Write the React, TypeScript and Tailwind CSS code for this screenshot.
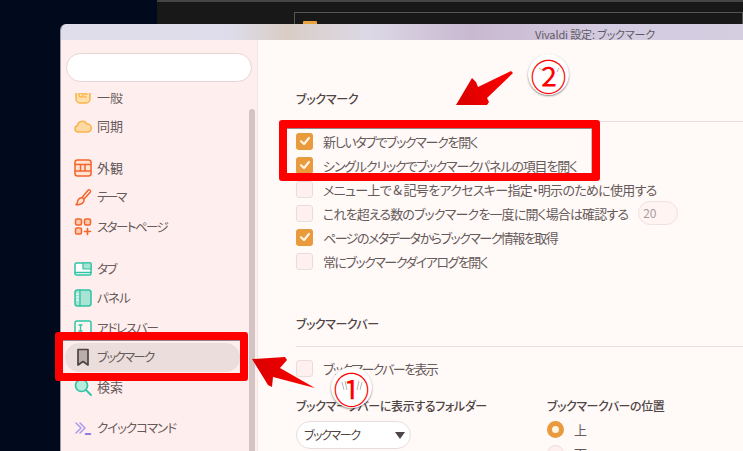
import React from "react";

const font = "[font-family:'Noto_Sans_CJK_JP','Noto_Sans',sans-serif] [font-feature-settings:'palt']";

function Icon({ children }: { children: React.ReactNode }) {
  return (
    <svg width="20" height="20" viewBox="0 0 20 20" fill="none" strokeLinecap="round" strokeLinejoin="round" className="shrink-0">
      {children}
    </svg>
  );
}

const O = "#f5652a";
const Y = "#f9b44a";
const G = "#2fc4a4";
const P = "#a99bf0";

function Nav({ icon, label, active, mt, text }: { icon: React.ReactNode; label: string; active?: boolean; mt?: string; text?: string }) {
  return (
    <div className={`flex h-[29.5px] w-[175px] shrink-0 items-center gap-[4px] rounded-[15px] pl-[8px] ${active ? "bg-[#ebdddc]" : ""} ${mt ?? ""}`}>
      {icon}
      <span className={`whitespace-nowrap leading-none text-[#665a5a] ${text ?? "text-[13px]"}`}>{label}</span>
    </div>
  );
}

function Check({ on }: { on?: boolean }) {
  if (on)
    return (
      <span className="flex size-[17px] shrink-0 items-center justify-center rounded-[3px] bg-[#e89a3c]">
        <svg width="12" height="12" viewBox="0 0 12 12" fill="none">
          <path d="M2 6.2 5 9 10 3" stroke="#fff3e2" strokeWidth="2.2" strokeLinecap="round" strokeLinejoin="round" />
        </svg>
      </span>
    );
  return <span className="size-[17px] shrink-0 rounded-[3px] border border-[#eadcdc] bg-[#fff0f0]" />;
}

function Row({ on, label, track, extra }: { on?: boolean; label: string; track: string; extra?: React.ReactNode }) {
  return (
    <div className="flex h-[24px] items-center gap-[10px]">
      <Check on={on} />
      <span className={`whitespace-nowrap text-[13px] leading-none text-[#665a5a] ${track}`}>{label}</span>
      {extra}
    </div>
  );
}

export default function App() {
  return (
    <div className={`relative h-[451px] w-[743px] overflow-hidden bg-[#000a1c] ${font}`}>
      {/* window behind */}
      <div className="absolute left-[157px] right-0 top-0 h-[30px] border-t-2 border-[#444444] bg-[#181818]">
        <div className="ml-[137px] mt-[10px] h-[30px] border border-[#555555] pl-[8px] pt-[8px]">
          <div className="h-[6px] w-[14px] rounded-[1px] bg-[#e8a33c]" />
        </div>
      </div>

      {/* settings window */}
      <div className="absolute bottom-0 left-[60px] right-0 top-[24px] flex flex-col overflow-hidden rounded-tl-[6px] border-l border-[#9a9aa0]">
        <div className="flex h-[16px] shrink-0 justify-end bg-[linear-gradient(90deg,#e0deea_0%,#dedcea_25%,#d9cdc6_33%,#dcd9e6_45%,#c9b9d0_60%,#d3cbdf_80%,#d5cde0_100%)] pr-[88px]">
          <span className="pt-[4px] text-[11px] leading-[13px] tracking-[-0.15px] text-[#5f5a66]">Vivaldi 設定: ブックマーク</span>
        </div>
        <div className="flex min-h-0 flex-1">
          {/* sidebar */}
          <div className="relative flex w-[197px] shrink-0 flex-col overflow-hidden border-r border-[#f6e8e6] bg-[#ffeeee]">
            <div className="shrink-0 px-[5px] pb-[11px] pt-[13px]">
              <div className="h-[29px] w-[186px] rounded-[15px] border border-[#e8d4d4] bg-white" />
            </div>
            <div className="relative min-h-0 flex-1 overflow-hidden">
              <div className="absolute left-[4px] top-[-11.5px] flex flex-col">
                <Nav label="一般" icon={<Icon><rect x="3" y="2" width="14" height="15" rx="4" fill="#ffe0ac" stroke={Y} strokeWidth="1.5" /><circle cx="8" cy="9" r="2" stroke={Y} strokeWidth="1.3" /><path d="M11 8h3M11 11h2" stroke={Y} strokeWidth="1.3" /></Icon>} />
                <Nav label="同期" icon={<Icon><path d="M5 16a3.2 3.2 0 0 1-.6-6.3A5 5 0 0 1 13.8 8a4 4 0 0 1 1 8z" fill="#ffd9a3" stroke={Y} strokeWidth="1.5" /></Icon>} />
                <Nav mt="mt-[12.5px]" label="外観" icon={<Icon><rect x="2" y="2" width="16" height="16" rx="2.5" fill="#ffe3d4" stroke={O} strokeWidth="1.5" /><path d="M2 6.5h16M2 13h16M7.5 6.5V13M12 6.5V13" stroke={O} strokeWidth="1.5" /></Icon>} />
                <Nav text="text-[12.5px] tracking-[-2.2px]" label="テーマ" icon={<Icon><path d="M9 10.5 15 3.300a1.500 1.500 0 0 1 2.300 1.900L11 12" stroke={O} strokeWidth="1.500" /><path d="M3 17.500c1.500-.8 1.300-2.600 2-4.200 1-2.200 3.500-3.300 5-2.200 1.700 1.300 1.200 3.800-.8 5.300-1.800 1.300-4.300 1.400-6.200 1.100z" fill="#ffe3d4" stroke={O} strokeWidth="1.500" /></Icon>} />
                <Nav text="text-[12.5px] tracking-[-1.55px]" label="スタートページ" icon={<Icon><rect x="2.500" y="2" width="6" height="6" rx="1.500" fill="#fbc9ae" stroke={O} strokeWidth="1.500" /><rect x="11.500" y="2" width="6" height="6" rx="1.500" fill="#fbc9ae" stroke={O} strokeWidth="1.500" /><rect x="2.500" y="11" width="6" height="6" rx="1.500" fill="#fbc9ae" stroke={O} strokeWidth="1.500" /><path d="M14.500 11.500v6M11.500 14.500h6" stroke={O} strokeWidth="1.600" /></Icon>} />
                <Nav mt="mt-[12.5px]" text="text-[12.5px] tracking-[-1.5px]" label="タブ" icon={<Icon><rect x="2" y="4" width="16" height="12" rx="1.500" fill="#fff" stroke={G} strokeWidth="1.500" /><rect x="10" y="4" width="8" height="6" fill="#a8e3d3" stroke={G} strokeWidth="1.200" /><path d="M2 13.500h16" stroke={G} strokeWidth="1.500" /></Icon>} />
                <Nav text="text-[12.5px] tracking-[-0.8px]" label="パネル" icon={<Icon><rect x="2" y="2" width="16" height="16" rx="2.500" fill="#a8e3d3" stroke={G} strokeWidth="1.500" /><path d="M7 2v16" stroke={G} strokeWidth="1.300" /><path d="M3.500 6h2M3.500 9h2M3.500 12h2" stroke="#fff" strokeWidth="1.200" /></Icon>} />
                <Nav text="text-[12.5px] tracking-[-1.2px]" label="アドレスバー" icon={<Icon><rect x="2" y="3" width="16" height="14" rx="2" fill="#fff4f0" stroke={G} strokeWidth="1.500" /><path d="M6 7h3M6 13h3M7.500 7v6" stroke={G} strokeWidth="1.300" /></Icon>} />
                <Nav active text="text-[12.5px] tracking-[-1.7px]" label="ブックマーク" icon={<Icon><path d="M5 2.500h10V18l-5-3.500L5 18z" fill="#b9adad" stroke="#4e4444" strokeWidth="1.700" /></Icon>} />
                <Nav label="検索" icon={<Icon><circle cx="8.500" cy="8.500" r="6" fill="#b7ebdc" stroke={G} strokeWidth="1.700" /><path d="m13 13 5 5" stroke={G} strokeWidth="1.800" /></Icon>} />
                <Nav mt="mt-[11.5px]" text="text-[12.5px] tracking-[-1.05px]" label="クイックコマンド" icon={<Icon><path d="m3 5 5 5-5 5M7 5l5 5-5 5" stroke={P} strokeWidth="1.500" /><path d="M12.500 16h5" stroke="#6a5ae0" strokeWidth="1.500" /></Icon>} />
                <Nav text="text-[12.5px] tracking-[-1.05px]" label="キーボード" icon={<Icon><rect x="2" y="5" width="16" height="10" rx="2" stroke={P} strokeWidth="1.500" /></Icon>} />
              </div>
              <div className="absolute bottom-0 left-[188px] top-[16px] w-[6px] rounded-t-[3px] bg-[#d3c3c3]" />
            </div>
          </div>

          {/* content */}
          <div className="min-w-0 flex-1 overflow-hidden bg-[#fff9f7] pl-[38px] pt-[50px]">
            <h2 className="text-[12px] font-medium leading-[18px] tracking-[-0.3px] text-[#4f4545]">ブックマーク</h2>
            <div className="mt-[13px] h-px bg-[#eadcdc]" />
            <div className="mt-[7px] flex flex-col">
              <Row on track="tracking-[-1.33px]" label="新しいタブでブックマークを開く" />
              <Row on track="tracking-[-1.17px]" label="シングルクリックでブックマークパネルの項目を開く" />
              <Row track="tracking-[-0.7px]" label="メニュー上で & 記号をアクセスキー指定・明示のために使用する" />
              <Row
                track="tracking-[-0.85px]"
                label="これを超える数のブックマークを一度に開く場合は確認する"
                extra={<span className="flex h-[24px] w-[40px] items-center rounded-[12px] border border-[#f0e2e0] bg-[#fff4f2] pl-[4px] text-[12px] text-[#a89c9c]">20</span>}
              />
              <Row on track="tracking-[-1.5px]" label="ページのメタデータからブックマーク情報を取得" />
              <Row track="tracking-[-1.5px]" label="常にブックマークダイアログを開く" />
            </div>
            <h2 className="mt-[42px] text-[12px] font-medium leading-[18px] tracking-[-0.5px] text-[#4f4545]">ブックマークバー</h2>
            <div className="mt-[13px] h-px bg-[#eadcdc]" />
            <div className="mt-[9px]">
              <Row track="tracking-[-1.6px]" label="ブックマークバーを表示" />
            </div>
            <div className="mt-[17px] flex">
              <div className="w-[251px]">
                <div className="text-[12px] font-medium leading-[18px] tracking-[-0.35px] text-[#4f4545]">ブックマークバーに表示するフォルダー</div>
                <div className="mt-[6px] flex h-[28px] w-[115px] items-center justify-between rounded-[14px] border border-[#eadcdc] bg-white pl-[7px] pr-[5px]">
                  <span className="text-[12px] leading-none tracking-[-1.4px] text-[#4f4545]">ブックマーク</span>
                  <span className="h-0 w-0 border-x-[5px] border-t-[7px] border-x-transparent border-t-[#4f4545]" />
                </div>
              </div>
              <div>
                <div className="text-[12px] font-medium leading-[18px] tracking-[-0.45px] text-[#4f4545]">ブックマークバーの位置</div>
                <div className="mt-[6px] flex h-[17px] items-center gap-[10px]">
                  <span className="size-[17px] rounded-full border-[5px] border-[#e89a3c] bg-[#fff4e6]" />
                  <span className="text-[13px] leading-none text-[#665a5a]">上</span>
                </div>
                <div className="mt-[7px] flex h-[17px] items-center gap-[10px]">
                  <span className="size-[17px] rounded-full border border-[#eadcdc] bg-[#fff0f0]" />
                  <span className="text-[13px] leading-none text-[#665a5a]">下</span>
                </div>
              </div>
            </div>
          </div>
        </div>
      </div>

      {/* annotations */}
      <div className="absolute left-[279px] top-[120px] h-[61px] w-[321px] rounded-[3px] border-[8px] border-[#fe0000] shadow-[inset_0_1px_0_#8f8787,inset_-1px_0_0_#c8c0c0]" />
      <div className="absolute left-[55px] top-[332px] h-[49px] w-[193px] rounded-[3px] border-[8px] border-[#fe0000] shadow-[inset_0_1px_0_#8f8787]" />
      <svg className="absolute left-0 top-0" width="743" height="451" viewBox="0 0 743 451" fill="none">
        <defs>
          <linearGradient id="a1" x1="0" y1="0" x2="1" y2="0">
            <stop offset="0" stopColor="#d80000" />
            <stop offset="1" stopColor="#ff0000" />
          </linearGradient>
        </defs>
        <path d="M456 105 472 78 476 82 478 87 511 71 513 73 487 98 489 102 487 105z" fill="url(#a1)" />
        <path d="M252 359 285 357 287 360 280 368 315 388 273 377 272 387 268 385z" fill="url(#a1)" />
      </svg>
      <div className="absolute left-[528px] top-[54px] flex size-[41px] items-center justify-center rounded-full bg-white text-[36px] leading-none text-[#fe0000] shadow-[0_1px_2px_rgba(0,0,0,0.45)]">②</div>
      <div className="absolute left-[331px] top-[367px] flex size-[41px] items-center justify-center rounded-full bg-white text-[36px] leading-none text-[#fe0000] shadow-[0_1px_2px_rgba(0,0,0,0.45)]">①</div>
      <svg className="absolute left-0 top-0" width="743" height="451" viewBox="0 0 743 451" fill="none">
        <path d="M539 68l4 3M559 68l-2 4M342 382l2 8M345 381l2 9M362 382l-2 8M359 381l-2 9" stroke="#b9b4b4" strokeWidth="1" />
      </svg>
    </div>
  );
}
